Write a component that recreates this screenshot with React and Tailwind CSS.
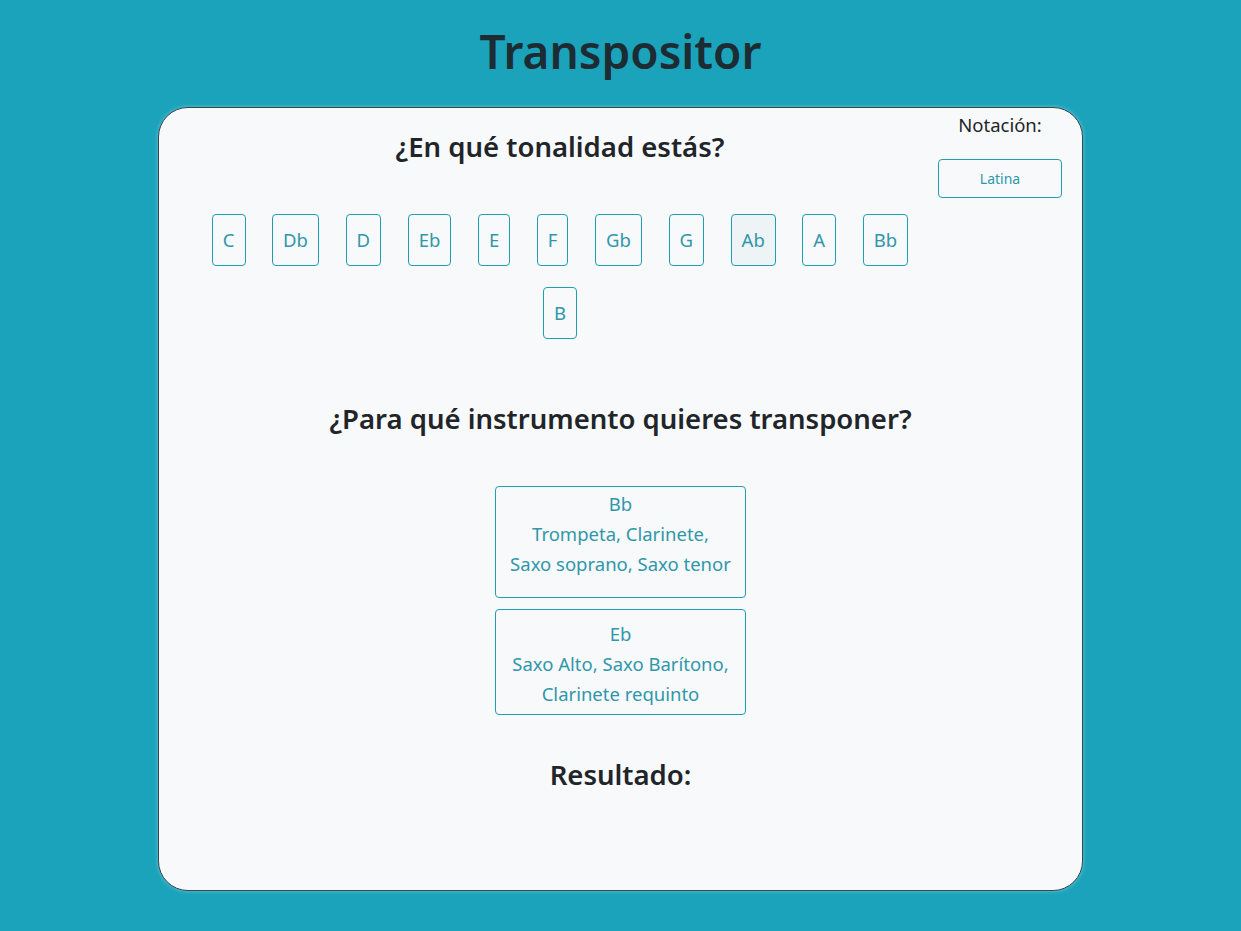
import { useState } from "react";

const notes = ["C", "Db", "D", "Eb", "E", "F", "Gb", "G", "Ab", "A", "Bb"];

const instruments = [
  { key: "Bb", lines: ["Bb", "Trompeta, Clarinete,", "Saxo soprano, Saxo tenor"], pad: "pt-[2px] pb-[18px]" },
  { key: "Eb", lines: ["Eb", "Saxo Alto, Saxo Barítono,", "Clarinete requinto"], pad: "pt-[9px] pb-[5px]" },
];

function NoteButton({ note, active, onClick }) {
  return (
    <button
      onClick={onClick}
      className={
        "h-[52px] px-[10px] rounded-[4px] border border-[#1f9fb4] text-[18.5px] text-[#3097aa] " +
        (active ? "bg-[#eef3f5]" : "bg-transparent")
      }
    >
      {note}
    </button>
  );
}

export default function App() {
  const [tone, setTone] = useState("Ab");
  const [inst, setInst] = useState("");

  return (
    <div className="min-h-[931px] bg-[#1aa3bb] pb-[40px] font-['Noto_Sans',sans-serif]">
      <h1 className="h-[107px] pt-[19px] text-center text-[46px] leading-[64px] font-semibold text-[#1c2c32]">
        Transpositor
      </h1>

      <div className="mx-auto w-[925px] rounded-[30px] border border-[#35474d] bg-[#f8f9fb] shadow-[0_0_4px_rgba(255,255,255,0.35)] pb-[98px]">
        <div className="flex pl-[26px] pr-[17px]">
          <div className="w-[750px] pt-[22px]">
            <h3 className="text-center text-[27.5px] leading-[34px] font-semibold text-[#212529]">
              ¿En qué tonalidad estás?
            </h3>
            <div className="mt-[50px] flex justify-center gap-x-[26.6px]">
              {notes.map((n) => (
                <NoteButton key={n} note={n} active={tone === n} onClick={() => setTone(n)} />
              ))}
            </div>
            <div className="mt-[21px] flex justify-center">
              <NoteButton note="B" active={tone === "B"} onClick={() => setTone("B")} />
            </div>
          </div>
          <div className="w-[130px] pt-[3px] flex flex-col items-center">
            <p className="text-[18.5px] leading-[27px] text-[#212529]">Notación:</p>
            <button className="mt-[21px] w-[124px] h-[39px] rounded-[4px] border border-[#1f9fb4] text-[14px] text-[#3097aa]">
              Latina
            </button>
          </div>
        </div>

        <h3 className="mt-[63px] text-center text-[27.5px] leading-[34px] font-semibold text-[#212529]">
          ¿Para qué instrumento quieres transponer?
        </h3>

        <div className="mt-[50px] flex flex-col items-center gap-[11px]">
          {instruments.map((i) => (
            <button
              key={i.key}
              onClick={() => setInst(i.key)}
              className={
                "w-[251px] rounded-[4px] border border-[#1f9fb4] text-[18.5px] leading-[30px] text-[#3097aa] " +
                i.pad +
                (inst === i.key ? " bg-[#eef3f5]" : "")
              }
            >
              {i.lines.map((l) => (
                <span key={l} className="block">{l}</span>
              ))}
            </button>
          ))}
        </div>

        <h3 className="mt-[43px] text-center text-[27.5px] leading-[34px] font-semibold text-[#212529]">
          Resultado:
        </h3>
      </div>
    </div>
  );
}
